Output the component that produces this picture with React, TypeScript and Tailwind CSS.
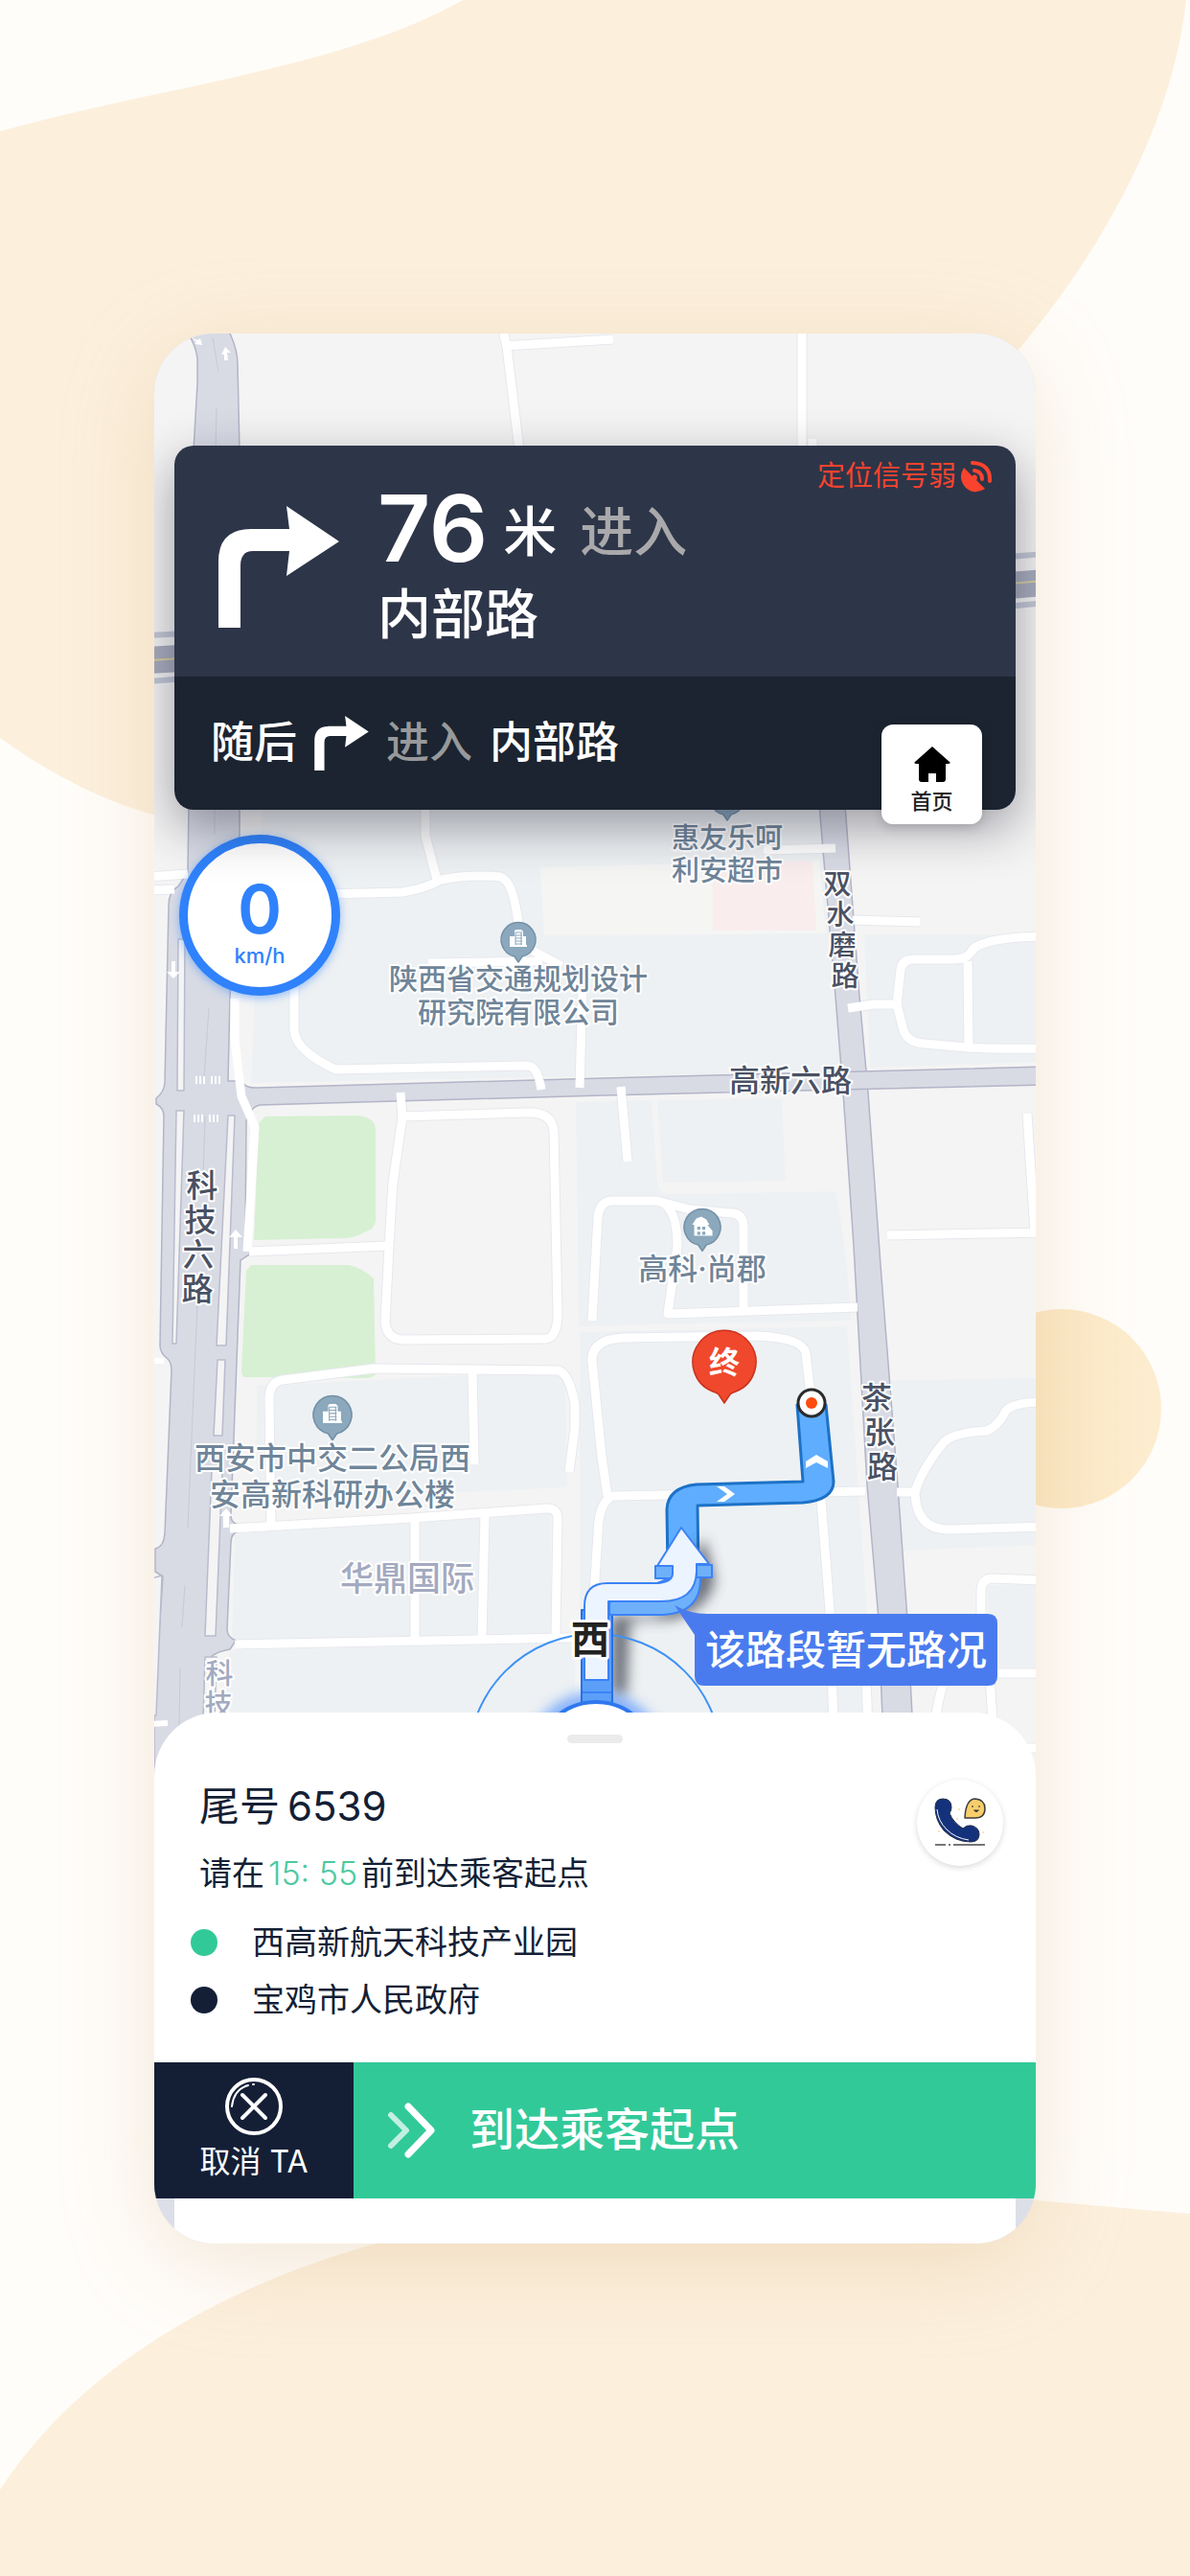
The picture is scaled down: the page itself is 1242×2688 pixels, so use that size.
import type { ReactNode } from "react";

// ── Data ────────────────────────────────────────────────────────────────────

// Minor streets, drawn as a white line over a faint casing.
const streets: string[] = [
  "M524 340 L529 362 L542 470",
  "M526 361 L640 354",
  "M837 340 V470",
  "M848 458 V480",
  "M444 840 V872 L456 918",
  "M340 933 L420 931 Q445 927 460 918 Q490 912 522 915 Q536 918 541 965",
  "M447 1005 L566 1003",
  "M556 992 L586 1008",
  "M307 1030 V1075 Q308 1096 350 1116 L550 1112 Q561 1112 565 1137",
  "M608 1030 L605 1135",
  "M418 1140 L420 1165 L410 1235 L406 1300 L402 1380 Q404 1397 420 1398 L570 1397 Q582 1395 582 1370 L578 1180 Q576 1160 550 1161 L420 1165",
  "M260 1306 L404 1300",
  "M283 1594 L281 1460 Q281 1442 295 1440 L390 1428 L582 1430 Q594 1432 600 1465 V1490 L594 1536",
  "M493 1431 L495 1528",
  "M240 1595 L430 1584 L570 1574 Q582 1573 582 1585 L580 1705",
  "M433 1586 V1710",
  "M506 1580 L503 1710",
  "M245 1716 L640 1708",
  "M618 1378 L624 1270 Q626 1253 640 1253 H685 L720 1262 L765 1266 Q777 1268 776 1282 V1365",
  "M690 1254 Q707 1262 707 1300 L697 1371 L895 1364",
  "M620 1664 L624 1600 Q625 1566 640 1561 L903 1556",
  "M634 1561 L628 1520 L618 1420 Q617 1398 650 1396 L790 1394 Q838 1396 841 1412 L846 1455",
  "M857 1565 L866 1680 L872 1860",
  "M904 1750 L908 1860",
  "M885 1052 L912 1048 L936 1048 L940 1012 Q941 1001 955 1001 H998 Q1010 1001 1016 990 Q1030 978 1090 977",
  "M936 1048 L943 1075 Q947 1088 965 1089 L1010 1093 Q1040 1095 1090 1094",
  "M1010 1003 L1011 1092",
  "M890 960 L960 962",
  "M797 887 L872 885",
  "M648 1134 L655 1212",
  "M1072 1162 L1080 1286",
  "M926 1289 L1090 1286",
  "M936 1557 H955 Q962 1533 985 1505 Q995 1495 1030 1493 Q1042 1488 1050 1472 Q1058 1463 1090 1463",
  "M955 1557 Q956 1596 990 1596 L1090 1593",
  "M1090 1649 L1035 1647 Q1024 1648 1024 1660 L1024 1690",
  "M1030 1700 L1040 1860",
  "M1010 1700 Q982 1750 977 1790",
  "M1035 1746 H1090",
  "M1045 1824 H1090",
  "M155 915 L196 912",
  "M155 929 L182 928",
];

const blocks: string[] = [
  "M274 840 H855 L878 1118 L262 1130 Z",
  "M902 975 H1090 V1108 L908 1114 Z",
  "M601 1150 L680 1148 L686 1235 Q688 1246 700 1246 L872 1243 Q884 1300 888 1378 L604 1384 Z",
  "M686 1148 L816 1146 L820 1232 L692 1234 Z",
  "M605 1390 L884 1384 L905 1680 L914 1860 H605 Z",
  "M268 1446 L590 1430 L592 1552 L268 1568 Z",
  "M245 1600 L575 1578 V1704 L242 1712 Z",
  "M240 1722 L600 1714 V1860 H220 Z",
  "M930 1440 L1090 1438 V1612 L940 1618 Z",
  "M1030 1654 H1090 V1740 H1036 Z",
];

// Narrow islands between the lanes of 科技六路.
const islands: string[] = [
  "M186 980 L193 980 L192 1138 H185 Z",
  "M184 1159 H192 L184 1402 H180 Z",
  "M238 1164 H245 L236 1404 H226 Z",
  "M227 1419 H235 L232 1498 H223 Z",
  "M221 1534 H232 L225 1707 H214 Z",
  "M214 1729 H226 L222 1860 H210 Z",
];

const POI = "#6f8599";
const ROAD = "#4a5163";
const FAINT = "#a3aac0";

const places = [
  { lines: ["惠友乐呵", "利安超市"], x: 759, y: 885, step: 34, size: 29, color: POI },
  { lines: ["陕西省交通规划设计", "研究院有限公司"], x: 541, y: 1032, step: 35, size: 30, color: POI },
  { lines: ["高科·尚郡"], x: 733, y: 1335, step: 0, size: 31, color: POI },
  { lines: ["西安市中交二公局西", "安高新科研办公楼"], x: 347, y: 1533, step: 38, size: 32, color: POI },
  { lines: ["华鼎国际"], x: 425, y: 1660, step: 0, size: 35, color: FAINT },
  { lines: ["高新六路"], x: 825, y: 1139, step: 0, size: 32, color: ROAD },
];

// Upright names that follow their road, one position per character.
const roadNames = [
  { text: "科技六路", x: "211 209 207 206", y: "1249 1285 1321 1357", size: 33, color: ROAD },
  { text: "双水磨路", x: "874 877 879 882", y: "933 965 997 1029", size: 29, color: ROAD },
  { text: "茶张路", x: "915 918 921", y: "1470 1506 1542", size: 32, color: ROAD },
  { text: "科技", x: "229 228", y: "1757 1789", size: 29, color: FAINT },
];

const stops = [
  { name: "西高新航天科技产业园", dot: "bg-[#32c999]" },
  { name: "宝鸡市人民政府", dot: "bg-[#141f36]" },
];

// ── Backdrop ────────────────────────────────────────────────────────────────

function Backdrop() {
  return (
    <svg
      aria-hidden
      viewBox="0 0 1242 2688"
      preserveAspectRatio="none"
      className="absolute inset-0 h-full w-full"
    >
      <defs>
        <linearGradient id="sun" x1="0" y1="0" x2="1" y2="0">
          <stop offset="0" stopColor="#fbe6bf" />
          <stop offset="1" stopColor="#fdedd0" />
        </linearGradient>
      </defs>
      <path
        d="M0 137 C170 90 360 70 483 0 H1238 C1225 120 1160 250 1062 366 C900 560 700 860 300 870 C160 868 70 820 0 770 Z"
        fill="#fcf0dd"
      />
      <path
        d="M0 2598 C90 2460 250 2380 396 2340 C640 2270 860 2288 1081 2296 L1242 2310 V2688 H0 Z"
        fill="#fcf0dd"
      />
      <circle cx="1108" cy="1470" r="104" fill="url(#sun)" />
    </svg>
  );
}

// ── Map ─────────────────────────────────────────────────────────────────────

function Pin({ x, y, r, children }: { x: number; y: number; r: number; children?: ReactNode }) {
  return (
    <g transform={`translate(${x} ${y}) scale(${r / 18})`}>
      <path
        d="M0 24 L-4 18 A18 18 0 1 1 4 18 Z"
        fill="#8ba8bd"
        stroke="#7491a8"
        strokeWidth="1.5"
        strokeLinejoin="round"
      />
      {children}
    </g>
  );
}

function OfficeGlyph() {
  return (
    <>
      <path d="M-9 8 V-3 H-4 V-9 L-2 -10 H3 L5 -8 V-3 H8 V6 H9 V8 Z" fill="#fff" />
      <path d="M-3 -7 H4 M-3 -4 H4 M-3 -1 H4 M-3 2 H4 M-3 5 H4 M-3 -7 V6 M3 -7 V6" stroke="#8ba8bd" strokeWidth="1" />
    </>
  );
}

function HouseGlyph() {
  return (
    <>
      <path d="M-10 -2 L-6 -8 L-1 -10 L4 -7 L7 -2 H5 L10 4 V9 H-8 V-2 Z" fill="#fff" />
      <path d="M-5 0 h3 v3 h-3 Z M0 0 h3 v3 h-3 Z M-5 5 h3 v3 h-3 Z M0 5 h3 v3 h-3 Z" fill="#8ba8bd" />
    </>
  );
}

function RoadMap() {
  return (
    <svg
      role="img"
      aria-label="导航地图"
      viewBox="161 348 920 1512"
      className="block w-full"
    >
      <defs>
        <filter id="soft" x="-50%" y="-50%" width="200%" height="200%">
          <feGaussianBlur stdDeviation="7" />
        </filter>
      </defs>
      <rect x="161" y="348" width="920" height="1512" fill="#f4f4f4" />

      {/* Land use */}
      {blocks.map((d) => (
        <path key={d} d={d} fill="#eef1f3" />
      ))}
      <path d="M564 905 L855 898 L862 974 L568 976 Z" fill="#f5f5f4" />
      <path d="M744 920 L765 900 L848 898 L852 971 H744 Z" fill="#f9edee" />
      <path
        d="M277 1165 L372 1164 Q392 1165 392 1180 V1274 Q391 1283 380 1286 Q370 1292 358 1292 L265 1294 L270 1172 Z"
        fill="#d7f0d3"
      />
      <path
        d="M262 1320 L364 1320 Q378 1323 390 1334 L392 1434 Q390 1438 380 1438 L256 1437 Q252 1437 252 1430 L257 1326 Z"
        fill="#d7f0d3"
      />

      {/* Elevated expressway running behind the banner */}
      <g stroke="#c3c8d6" fill="none">
        <path d="M155 663 L300 655 M155 711 L300 700 M1040 582 L1090 578 M1040 634 L1090 629" strokeWidth="6" />
        <path d="M155 689 L300 680 M1040 612 L1090 608" strokeWidth="28" stroke="#a8adbd" />
        <path d="M155 689 L300 680 M1040 610 L1090 606" strokeWidth="2" stroke="#d8cf9f" />
      </g>

      {/* Streets: casing first so crossings stay open */}
      <g fill="none" stroke="#e6e8ee" strokeWidth="11" strokeLinejoin="round">
        {streets.map((d) => (
          <path key={d} d={d} />
        ))}
      </g>

      {/* Main roads */}
      <g fill="#d8dbe4" stroke="#b3b4c7" strokeWidth="1.5">
        <path d="M855 840 L872 1040 L880 1140 L891 1300 L905 1550 L917 1690 L924 1870 H956 L947 1690 L937 1550 L919 1320 L906 1140 L897 1040 L882 840 Z" />
        <path d="M190 340 Q204 356 206 374 V400 L202 470 L197 840 L196 910 L186 925 Q176 930 176 945 L172 1130 Q171 1140 163 1146 V1152 Q171 1156 171 1165 L167 1404 Q167 1412 175 1418 Q179 1422 179 1430 L172 1600 Q171 1614 162 1616 V1640 L170 1645 L161 1780 V1870 H210 L214 1740 Q216 1725 240 1721 L246 1712 Q237 1708 237 1700 L241 1610 Q241 1598 252 1597 V1592 Q240 1590 241 1580 L251 1315 L262 1308 L256 1300 L257 1170 Q262 1154 272 1153 L630 1143 L1090 1132 V1113 L630 1125 L270 1135 Q256 1136 252 1128 H238 L240 1040 L250 900 V470 L248 380 Q248 362 236 340 Z" />
      </g>
      <path d="M872 1124 L905 1122 L907 1134 L881 1136 Z" fill="#d8dbe4" />
      <g fill="none" stroke="#c6c9d8" strokeWidth="1">
        <path d="M222 352 L228 388 M226 425 L225 470 L224 870 M218 1052 L213 1125 M214 1165 L212 1230 M206 1360 L196 1594 M193 1654 L190 1698 M188 1740 L186 1860" />
      </g>
      <g fill="#f4f4f5" stroke="#b9bbcc" strokeWidth="1.5" strokeLinejoin="round">
        <path d="M155 1648 L169 1644 L163 1790 H155 Z" />
        {islands.map((d) => (
          <path key={d} d={d} />
        ))}
      </g>

      {/* Zebra crossings and lane arrows */}
      <g stroke="#fff" strokeWidth="2" fill="none">
        <path d="M205 1123 v8 M209 1123 v8 M213 1123 v8 M221 1123 v8 M225 1123 v8 M229 1123 v8" />
        <path d="M203 1163 v8 M207 1163 v8 M211 1163 v8 M219 1163 v8 M223 1163 v8 M227 1163 v8" />
      </g>
      <g fill="#fff">
        <path d="M179 1003 h4 v11 h5 l-7 7 l-7 -7 h5 Z" />
        <path d="M244 1303 h4 v-12 h5 l-7 -8 l-7 8 h5 Z" />
        <path d="M234 376 h4 l-1 -8 h4 l-6 -6 l-4 8 h3 Z" />
        <path d="M200 352 l6 3 l3 -2 l2 7 l-8 -1 l2 -2 Z" />
        <path d="M233 1594 v-12 h-4 l7 -8 l7 8 h-4 v12 Z" />
      </g>

      <g fill="none" stroke="#fff" strokeWidth="9" strokeLinejoin="round">
        {streets.map((d) => (
          <path key={d} d={d} />
        ))}
        <path d="M245 1042 V1085 L252 1144 L266 1176 L258 1306" />
        <path d="M155 1799 L175 1798" strokeWidth="6" />
        <path d="M155 1420 L171 1420" strokeWidth="6" />
      </g>

      {/* Planned route */}
      <path
        d="M832 1466 L838 1546 L727 1549 Q697 1552 696 1575 L697 1640 H729 L728 1571 L838 1568 Q870 1565 870 1546 L862 1466 Z"
        fill="#5fadff"
        stroke="#1d72c6"
        strokeWidth="3"
        strokeLinejoin="round"
      />
      <path d="M748 1551 H756 L767 1559 L756 1567 H748 L759 1559 Z" fill="#fff" />
      <path d="M841 1532 V1525 L852 1518 L864 1525 V1532 L852 1526 Z" fill="#fff" />

      {/* Position rings */}
      <path
        d="M640 1766 V1688 H700 Q738 1678 744 1648 L734 1610 L722 1630 L724 1665 L690 1684 L655 1692 L652 1766 Z"
        fill="#3c434f"
        stroke="#3c434f"
        strokeWidth="4"
        opacity="0.75"
        filter="url(#soft)"
      />
      <circle cx="622" cy="1839" r="74" fill="#3d86ff" opacity="0.6" filter="url(#soft)" />
      <circle cx="621" cy="1837" r="132" fill="none" stroke="#3f92f5" strokeWidth="2" />

      {/* Manoeuvre arrow, side faces then top face */}
      <g stroke="#3b82f6" strokeWidth="2" strokeLinejoin="round">
        <path d="M607 1680 V1790 H639 V1680 Z" fill="#5b9ff8" stroke="#2771e0" />
        <path d="M636 1672 V1685 H692 Q731 1683 731 1648 V1634 Z" fill="#6fb0fa" />
        <path d="M684 1634 H702 V1647 H684 Z M727 1633 H743 V1646 H727 Z" fill="#6fb0fa" />
        <path
          d="M711 1594 L740 1632 H727 V1640 Q726 1671 690 1671 H635 V1753 H610 V1676 Q610 1652 634 1652 H688 Q702 1650 702 1642 V1634 H686 Z"
          fill="#ecf4ff"
        />
        <path d="M608 1766 H638" />
      </g>
      <circle cx="622" cy="1839" r="63" fill="#fff" stroke="#2f78ee" strokeWidth="4" />

      {/* Destination */}
      <circle cx="847" cy="1464" r="14" fill="#fff" stroke="#2b2b2b" strokeWidth="3" />
      <circle cx="847" cy="1464" r="6" fill="#ff4a10" />
      <path
        d="M756 1464 L750 1455 Q748 1453 744 1452 A33 33 0 1 1 768 1452 Q764 1453 762 1455 Z"
        fill="#f0482d"
        stroke="#c9321d"
        strokeWidth="1.5"
      />
      <text x="756" y="1433" fontSize="32" fontWeight="700" fill="#fff" textAnchor="middle">
        终
      </text>

      <Pin x={759} y={832} r={18} />
      <Pin x={541} y={980} r={18}>
        <OfficeGlyph />
      </Pin>
      <Pin x={733} y={1280} r={19}>
        <HouseGlyph />
      </Pin>
      <Pin x={347} y={1476} r={20}>
        <OfficeGlyph />
      </Pin>

      <g textAnchor="middle" fontWeight="500" stroke="#fff" strokeWidth="4" strokeLinejoin="round" paintOrder="stroke">
        {places.map((p) => (
          <text key={p.lines[0]} fontSize={p.size} fill={p.color}>
            {p.lines.map((line, i) => (
              <tspan key={line} x={p.x} y={p.y + i * p.step}>
                {line}
              </tspan>
            ))}
          </text>
        ))}
        {roadNames.map((r) => (
          <text key={r.text} x={r.x} y={r.y} fontSize={r.size} fill={r.color}>
            {r.text}
          </text>
        ))}
        <text x="616" y="1725" fontSize="40" fontWeight="700" fill="#222" strokeWidth="6">
          西
        </text>
      </g>

      {/* Traffic callout */}
      <path
        d="M704 1675 Q720 1684 738 1684 H1031 Q1041 1684 1041 1694 V1749 Q1041 1759 1031 1759 H735 Q725 1759 725 1749 V1706 Z"
        fill="#4a7bee"
      />
      <text x="883" y="1737" fontSize="42" fontWeight="500" fill="#fff" textAnchor="middle">
        该路段暂无路况
      </text>
    </svg>
  );
}

// ── Navigation banner ───────────────────────────────────────────────────────

function TurnRight({ className }: { className: string }) {
  return (
    <svg aria-hidden viewBox="0 0 126 127" className={className}>
      <path
        d="M0 127 V58 Q0 24 34 24 H74 L71 0 L126 37 L71 73 L74 47 H36 Q23 47 23 62 V127 Z"
        fill="#fff"
      />
    </svg>
  );
}

function SatelliteIcon() {
  return (
    <svg aria-hidden viewBox="0 0 34 34" className="size-[34px]">
      <path d="M4 8 L13 17 Q14 14 17 16 Q19 19 17 21 L26 30 Q15 37 6 29 Q-3 19 4 8 Z" fill="#f9432f" />
      <path
        d="M15 11 Q23 12 23 20 M13 3 Q32 4 31 22"
        stroke="#f9432f"
        strokeWidth="4"
        strokeLinecap="round"
        fill="none"
      />
    </svg>
  );
}

function Banner() {
  return (
    <section className="relative rounded-[20px] text-white shadow-[0_18px_52px_rgba(30,32,50,0.42)]">
      <div className="relative flex h-[241px] items-center gap-10 rounded-t-[20px] bg-[#2d3548] pt-3 pl-[46px]">
        <TurnRight className="h-[127px] w-[126px] shrink-0" />
        <div>
          <p className="flex h-[100px] items-end font-medium">
            <span className="text-[96px] leading-[100px] font-semibold">76</span>
            <span className="ml-4 text-[56px] leading-[92px]">米</span>
            <span className="ml-6 text-[56px] leading-[92px] text-[#a9a9ab]">进入</span>
          </p>
          <p className="text-[56px] leading-[80px] font-medium">内部路</p>
        </div>
        <p className="absolute top-3 right-6 flex items-center gap-1 text-[29px] leading-10 text-[#f9432f]">
          定位信号弱
          <SatelliteIcon />
        </p>
      </div>
      <div className="flex h-[139px] items-center gap-[18px] rounded-b-[20px] bg-[#1b2430] pl-[38px] text-[45px] font-medium">
        <span>随后</span>
        <TurnRight className="h-[57px] w-[57px] shrink-0" />
        <span className="text-[#98999b]">进入</span>
        <span>内部路</span>
      </div>
      <button
        type="button"
        className="absolute right-[35px] -bottom-[15px] flex h-[104px] w-[105px] flex-col items-center justify-end rounded-[12px] bg-white pb-2 text-[#222] shadow-[0_4px_12px_rgba(0,0,0,0.15)]"
      >
        <svg aria-hidden viewBox="0 0 38 37" className="h-[37px] w-[38px]">
          <path
            d="M19 0 L37 16 Q39 18 35 18 H33 V34 Q33 37 30 37 H23 V28 H15 V37 H8 Q5 37 5 34 V18 H3 Q-1 18 1 16 Z"
            fill="#000"
          />
        </svg>
        <span className="mt-1 text-[22px] leading-8 font-medium">首页</span>
      </button>
    </section>
  );
}

function Speedometer() {
  return (
    <div className="flex size-[168px] flex-col items-center rounded-full border-[9px] border-[#2f82fb] bg-white pt-[31px] text-[#2f82fb] shadow-[0_2px_10px_rgba(47,130,251,0.5)]">
      <span className="text-[70px] leading-[76px] font-semibold">0</span>
      <span className="text-[22px] leading-5 font-medium">km/h</span>
    </div>
  );
}

// ── Order sheet ─────────────────────────────────────────────────────────────

function CallIcon() {
  return (
    <svg aria-hidden viewBox="0 0 54 51" className="h-[51px] w-[54px]">
      <path
        d="M1 10 Q1 1 9 1 Q18 1 18 10 Q18 13 16 16 Q20 26 30 32 Q34 28 39 29 Q47 31 47 38 Q47 46 38 46 Q22 46 10 34 Q1 23 1 10 Z"
        fill="#14317c"
        stroke="#222b45"
        strokeWidth="1"
      />
      <path d="M3 12 Q4 24 13 33 Q22 42 36 44" fill="none" stroke="#fff" strokeWidth="1" />
      <path
        d="M32 21 Q33 1 43 1 Q53 2 53 11 Q53 21 43 21 Z"
        fill="#f8ce6b"
        stroke="#3c3c3c"
        strokeWidth="1.5"
        strokeLinejoin="round"
      />
      <path d="M40 8 v2 M47 8 v2 M42 13 Q44 16 46 13 Z" stroke="#3c3c3c" strokeWidth="1.2" fill="#3c3c3c" />
      <path d="M1 49 H12 M15 49 H17 M20 49 H53" stroke="#4a4a4a" strokeWidth="1.6" />
      <g fill="#f7d9a8">
        <circle cx="26" cy="12" r="1" />
        <circle cx="24" cy="22" r="1" />
        <circle cx="51" cy="36" r="1" />
        <circle cx="5" cy="35" r="1" />
      </g>
    </svg>
  );
}

function OrderSheet() {
  return (
    <section className="relative -mt-[73px] text-[#141f36]">
      <div className="rounded-t-[66px] bg-white pt-[23px] pb-[35px]">
        <div className="mx-auto h-[9px] w-[58px] rounded-full bg-[#ebebeb]" />
        <div className="flex items-center justify-between pt-9 pr-[34px] pl-[47px]">
          <div>
            <h1 className="flex items-center gap-2 text-[42px] leading-[60px]">
              <span>尾号</span>
              <span>6539</span>
            </h1>
            <p className="mt-2.5 flex items-center gap-1 text-[34px] leading-[60px]">
              <span>请在</span>
              <time className="font-light text-[#4cc9a0]">15: 55</time>
              <span>前到达乘客起点</span>
            </p>
          </div>
          <button
            type="button"
            aria-label="联系乘客"
            className="mb-9 flex size-[90px] items-center justify-center rounded-full bg-white shadow-[0_2px_6px_rgba(0,0,0,0.15)]"
          >
            <CallIcon />
          </button>
        </div>
        <ul className="mt-3 pl-[38px] text-[34px] leading-[60px]">
          {stops.map((s) => (
            <li key={s.name} className="flex items-center gap-9">
              <span className={`size-7 rounded-full ${s.dot}`} />
              {s.name}
            </li>
          ))}
        </ul>
      </div>

      <div className="flex h-[142px] text-white">
        <button
          type="button"
          className="flex w-[208px] shrink-0 flex-col items-center bg-[#141f36] pt-4 text-[32px] leading-10"
        >
          <svg
            aria-hidden
            viewBox="0 0 62 60"
            className="h-[60px] w-[62px]"
            fill="none"
            stroke="#fff"
            strokeLinecap="round"
          >
            <circle cx="31" cy="30" r="28" strokeWidth="4" />
            <path d="M19 18 L43 42 M43 18 L19 42" strokeWidth="4" />
            <path d="M8 30 Q10 12 25 8 M30 7 h1" strokeWidth="2" />
          </svg>
          <span className="mt-2">取消 TA</span>
        </button>
        <button
          type="button"
          className="flex flex-1 items-center gap-9 bg-[#32c999] pl-[35px] text-[47px] font-medium"
        >
          <svg
            aria-hidden
            viewBox="0 0 50 58"
            className="h-[58px] w-[50px]"
            fill="none"
            stroke="#fff"
            strokeWidth="7"
            strokeLinecap="round"
            strokeLinejoin="round"
          >
            <path d="M4 13 L20 29 L4 45" opacity="0.7" strokeWidth="6" />
            <path d="M22 4 L46 29 L22 54" />
          </svg>
          到达乘客起点
        </button>
      </div>
      <div className="mx-[21px] h-[47px] bg-white" />
    </section>
  );
}

// ── Page ────────────────────────────────────────────────────────────────────

export default function App() {
  return (
    <div className="relative flex min-h-screen items-center justify-center overflow-hidden bg-[#fffdfa] px-[161px] py-16 font-['Inter','Noto_Sans_CJK_SC',sans-serif]">
      <Backdrop />
      <main
        lang="zh-CN"
        className="relative w-full max-w-[920px] overflow-hidden rounded-[62px] bg-[#dcdfe8] shadow-[0_20px_100px_rgba(200,150,90,0.22)]"
      >
        <RoadMap />
        {/* Driving HUD floats above the map */}
        <div className="absolute inset-x-0 top-0 px-[21px] pt-[117px]">
          <Banner />
          <div className="mt-[26px] ml-[5px]">
            <Speedometer />
          </div>
        </div>
        <OrderSheet />
      </main>
    </div>
  );
}
